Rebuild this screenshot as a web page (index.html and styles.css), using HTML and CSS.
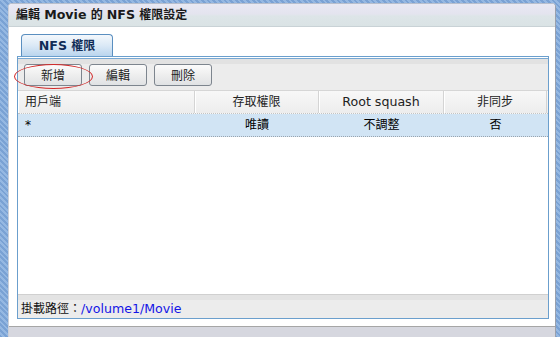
FILE: index.html
```html
<!DOCTYPE html>
<html lang="zh-Hant">
<head>
<meta charset="utf-8">
<title>編輯 Movie 的 NFS 權限設定</title>
<link rel="stylesheet" href="styles.css">
</head>
<body>
<div class="desk">
  <div class="win">
    <div class="titlebar">編輯 <span class="lat">Movie</span> 的 <span class="lat">NFS</span> 權限設定</div>
    <div class="content">
      <div class="tabs"><div class="tab"><span class="lat">NFS</span> 權限</div></div>
      <div class="panel">
        <div class="toolbar">
          <button class="btn">新增</button>
          <button class="btn">編輯</button>
          <button class="btn">刪除</button>
          <span class="mark"></span>
        </div>
        <div class="thead">
          <div class="c c1">用戶端</div>
          <div class="c c2">存取權限</div>
          <div class="c c3"><span class="lat">Root squash</span></div>
          <div class="c c4">非同步</div>
        </div>
        <div class="trow">
          <div class="c c1">*</div>
          <div class="c c2">唯讀</div>
          <div class="c c3">不調整</div>
          <div class="c c4">否</div>
        </div>
        <div class="spacer"></div>
        <div class="footer">掛載路徑：<span class="path lat">/volume1/Movie</span></div>
      </div>
    </div>
    <div class="statusbar"></div>
  </div>
</div>
</body>
</html>
```
FILE: styles.css
```css
html, body {
  margin: 0;
  padding: 0;
}
body {
  width: 560px;
  height: 337px;
  overflow: hidden;
  font-family: "DejaVu Sans", "Noto Sans CJK TC", sans-serif;
  font-size: 12px;
  color: #000;
  background: repeating-linear-gradient(45deg, #7aa2d4 0 2px, #95b8e2 2px 4px);
}
.lat {
  font-size: 12.6px;
}
.desk {
  display: flex;
  height: 337px;
  padding: 3px 4px 0 8px;
  box-sizing: border-box;
}
.win {
  width: 548px;
  height: 334px;
  box-sizing: border-box;
  display: flex;
  flex-direction: column;
  background: #fff;
  border-top: 1px solid #b9bfcc;
  border-left: 1px solid #c9ced8;
  border-right: 1px solid #9aa0ac;
  border-radius: 4px 4px 0 0;
}
.titlebar {
  height: 22px;
  line-height: 22px;
  padding-left: 7px;
  font-weight: bold;
  color: #1a1a1a;
  border-bottom: 1px solid #c9d2d6;
  background: linear-gradient(#e9e9f3 0, #e4e4ef 45%, #dde5e8 55%, #dae3e5 100%);
  border-radius: 3px 3px 0 0;
}
.content {
  flex: 1;
  display: flex;
  flex-direction: column;
  padding: 7px 6px 7px 8px;
}
.tabs {
  display: flex;
  padding-left: 4px;
}
.tab {
  width: 92px;
  height: 22px;
  box-sizing: border-box;
  border: 1px solid #5a8fc0;
  border-bottom: none;
  border-radius: 4px 4px 0 0;
  background: linear-gradient(#f4f8fc, #dbe9f6 50%, #bad5ee);
  color: #112d58;
  font-weight: bold;
  text-align: center;
  line-height: 22px;
}
.panel {
  height: 263px;
  box-sizing: border-box;
  border: 1px solid #6b9fcd;
  padding-top: 1px;
  display: flex;
  flex-direction: column;
  background: #fff;
}
.toolbar {
  position: relative;
  display: flex;
  gap: 7px;
  height: 26px;
  padding: 5px 0 0 6px;
  box-sizing: content-box;
  border-top: 1px solid #78a8d3;
  border-bottom: 1px solid #d6d6d6;
  background: linear-gradient(#e2e2e2 0, #e2e2e2 5px, #ececec 5px);
}
.btn {
  width: 58px;
  height: 22px;
  box-sizing: border-box;
  border: 1px solid #7d858e;
  border-radius: 3px;
  background: linear-gradient(#fbfbfb, #eeeeee 50%, #e0e2e4);
  font-family: "Noto Sans CJK TC", "DejaVu Sans", sans-serif;
  font-size: 12px;
  color: #222;
  padding: 0;
  line-height: 20px;
}
.mark {
  position: absolute;
  left: -4px;
  top: 5px;
  width: 79px;
  height: 25px;
  box-sizing: border-box;
  border: 1.6px solid #d22a2a;
  border-radius: 50%;
}
.thead, .trow {
  display: flex;
  height: 23px;
  box-sizing: border-box;
  line-height: 22px;
}
.thead {
  background: linear-gradient(#f8f8f8, #ededed);
  border-bottom: 1px dotted #c4c4c4;
  color: #222;
}
.trow {
  background: #d1e4f4;
  border-bottom: 1px dotted #9aa4ae;
}
.c {
  box-sizing: border-box;
  text-align: center;
  white-space: nowrap;
}
.c1 { width: 177px; text-align: left; padding-left: 7px; }
.c2 { width: 124px; }
.c3 { width: 125px; }
.c4 { width: 103px; }
.thead .c {
  border-right: 1px solid #d4d4d4;
  box-shadow: inset 1px 0 0 #fff;
}
.spacer { flex: 1; }
.footer {
  height: 24px;
  box-sizing: border-box;
  border-top: 1px solid #d0d0d0;
  background: linear-gradient(#e3e3e3 0, #e3e3e3 5px, #ececec 5px);
  padding: 6px 0 0 3px;
  line-height: 16px;
  color: #111;
}
.path { color: #1414e6; }
.statusbar {
  height: 10px;
  border-top: 1px solid #a6a6a6;
  background: #d6d7df;
}
```
